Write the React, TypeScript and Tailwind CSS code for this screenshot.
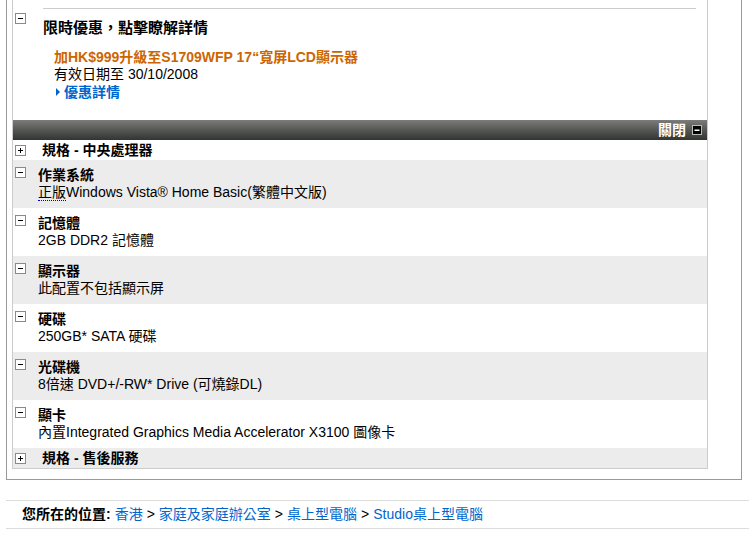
import React from 'react';

function BoxIcon({ plus = false }: { plus?: boolean }) {
  return (
    <svg width="11" height="11" viewBox="0 0 11 11" className="block">
      <rect x="0.5" y="0.5" width="10" height="10" fill="#fff" stroke="#8a8a8a" />
      <rect x="3" y="5" width="5" height="1" fill="#000" />
      {plus && <rect x="5" y="3" width="1" height="5" fill="#000" />}
    </svg>
  );
}

function BarIcon() {
  return (
    <svg width="10" height="10" viewBox="0 0 10 10" className="block">
      <rect x="0.5" y="0.5" width="9" height="9" fill="#000" stroke="#bbb" />
      <rect x="2.5" y="4.5" width="5" height="1.5" fill="#fff" />
    </svg>
  );
}

const specs = [
  { title: '作業系統', desc: <><span className="border-b border-dotted border-[#0000cc]">正版</span>Windows Vista® Home Basic(繁體中文版)</> },
  { title: '記憶體', desc: '2GB DDR2 記憶體' },
  { title: '顯示器', desc: '此配置不包括顯示屏' },
  { title: '硬碟', desc: '250GB* SATA 硬碟' },
  { title: '光碟機', desc: '8倍速 DVD+/-RW* Drive (可燒錄DL)' },
  { title: '顯卡', desc: '內置Integrated Graphics Media Accelerator X3100 圖像卡' },
];

function SectionRow({ label, gray }: { label: string; gray?: boolean }) {
  return (
    <div className={`flex h-[20px] items-center ${gray ? 'bg-[#ececec]' : 'bg-white'}`}>
      <div className="w-[29px] pl-[2px]">
        <BoxIcon plus />
      </div>
      <div className="text-[14px] font-bold leading-[20px] text-black">{label}</div>
    </div>
  );
}

export default function App() {
  return (
    <div
      className="relative h-[533px] w-[749px] overflow-hidden bg-white text-black"
      style={{ fontFamily: '"Liberation Sans", "Noto Sans CJK TC", sans-serif' }}
    >
      {/* outer panel */}
      <div className="ml-[6px] w-[736px] border-x border-b border-[#999] pb-[10px] pl-[5px] pr-[33px]">
        {/* inner panel */}
        <div className="border-x border-b border-[#ccc]">
          {/* promo */}
          <div className="flex h-[120px] pt-[8px]">
            <div className="w-[30px] pl-[2px] pt-[5px]">
              <BoxIcon />
            </div>
            <div className="mr-[11px] flex-1 border-t border-[#ccc] pt-[9px]">
              <div className="text-[15px] font-bold leading-[20px]">限時優惠，點擊瞭解詳情</div>
              <div className="pl-[11px] pt-[11px]">
                <div className="text-[14px] font-bold leading-[17px] text-[#cc6600]">
                  加HK$999升級至S1709WFP 17“寬屏LCD顯示器
                </div>
                <div className="text-[14px] leading-[17px]">有效日期至 30/10/2008</div>
                <div className="flex items-center text-[14px] font-bold leading-[18px] text-[#0066cc]">
                  <span className="ml-[2px] mr-[4px] inline-block h-0 w-0 border-y-[4px] border-l-[4px] border-y-transparent border-l-[#0066cc]" />
                  優惠詳情
                </div>
              </div>
            </div>
          </div>

          {/* dark bar */}
          <div className="flex h-[20px] items-center justify-end bg-gradient-to-b from-[#7c7d7a] to-[#313430] pr-[5px]">
            <span className="mr-[6px] text-[14px] font-bold leading-[20px] text-white">關閉</span>
            <BarIcon />
          </div>

          <SectionRow label="規格 - 中央處理器" />

          {specs.map((s, i) => (
            <div key={s.title} className={`flex h-[48px] ${i % 2 === 0 ? 'bg-[#ececec]' : 'bg-white'}`}>
              <div className="w-[25px] pl-[2px] pt-[7px]">
                <BoxIcon />
              </div>
              <div className="pt-[7px] text-[14px] leading-[17px]">
                <div className="font-bold">{s.title}</div>
                <div>{s.desc}</div>
              </div>
            </div>
          ))}

          <SectionRow label="規格 - 售後服務" gray />
        </div>
      </div>

      {/* breadcrumb */}
      <div className="ml-[6px] mt-[20px] flex h-[29px] items-center border-y border-[#ddd] pl-[16px] text-[14px]">
        <span className="mr-[4px] font-bold">您所在的位置:</span>
        <span className="text-[#0066cc]">香港</span>
        <span className="mx-[4px]">&gt;</span>
        <span className="text-[#0066cc]">家庭及家庭辦公室</span>
        <span className="mx-[4px]">&gt;</span>
        <span className="text-[#0066cc]">桌上型電腦</span>
        <span className="mx-[4px]">&gt;</span>
        <span className="text-[#0066cc]">Studio桌上型電腦</span>
      </div>
    </div>
  );
}
